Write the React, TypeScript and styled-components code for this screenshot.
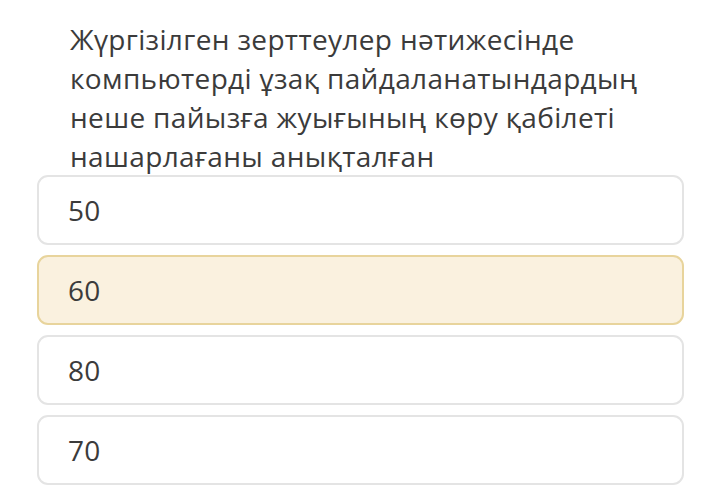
import React from 'react';
import styled, {createGlobalStyle} from 'styled-components';

const GlobalStyle = createGlobalStyle`
  html, body {
    margin: 0;
    padding: 0;
    background: #ffffff;
  }
  body {
    font-family: "Open Sans", "Noto Sans", sans-serif;
    color: #3b3b3b;
  }
`;

const options = [
  {label: '50', selected: false},
  {label: '60', selected: true},
  {label: '80', selected: false},
  {label: '70', selected: false},
];

export default function App() {
  return (
    <>
      <GlobalStyle />
      <Page>
        <Question>
          Жүргізілген зерттеулер нәтижесінде компьютерді ұзақ
          пайдаланатындардың неше пайызға жуығының көру қабілеті
          нашарлағаны анықталған
        </Question>
        <OptionList>
          {options.map(o => (
            <OptionCard key={o.label} $selected={o.selected}>
              {o.label}
            </OptionCard>
          ))}
        </OptionList>
      </Page>
    </>
  );
}

const Page = styled.div`
  width: 720px;
  height: 493px;
  padding: 20px 36px 0 37px;
  box-sizing: border-box;
  overflow: hidden;
`;

const Question = styled.p`
  margin: 0 0 0 33px;
  max-width: 610px;
  font-size: 28px;
  line-height: 39px;
  letter-spacing: 0.35px;
  font-weight: 400;
  color: #3b3b3b;
`;

const OptionList = styled.div`
  display: flex;
  flex-direction: column;
  gap: 10px;
  margin-top: -1px;
`;

const OptionCard = styled.div<{$selected?: boolean}>`
  height: 70px;
  box-sizing: border-box;
  display: flex;
  align-items: center;
  padding-left: 29px;
  border: 2px solid ${p => (p.$selected ? '#e8d49c' : '#e4e4e4')};
  border-radius: 11px;
  background: ${p => (p.$selected ? '#faf1df' : '#ffffff')};
  font-size: 28px;
  letter-spacing: 0.3px;
  color: #3b3b3b;
`;
